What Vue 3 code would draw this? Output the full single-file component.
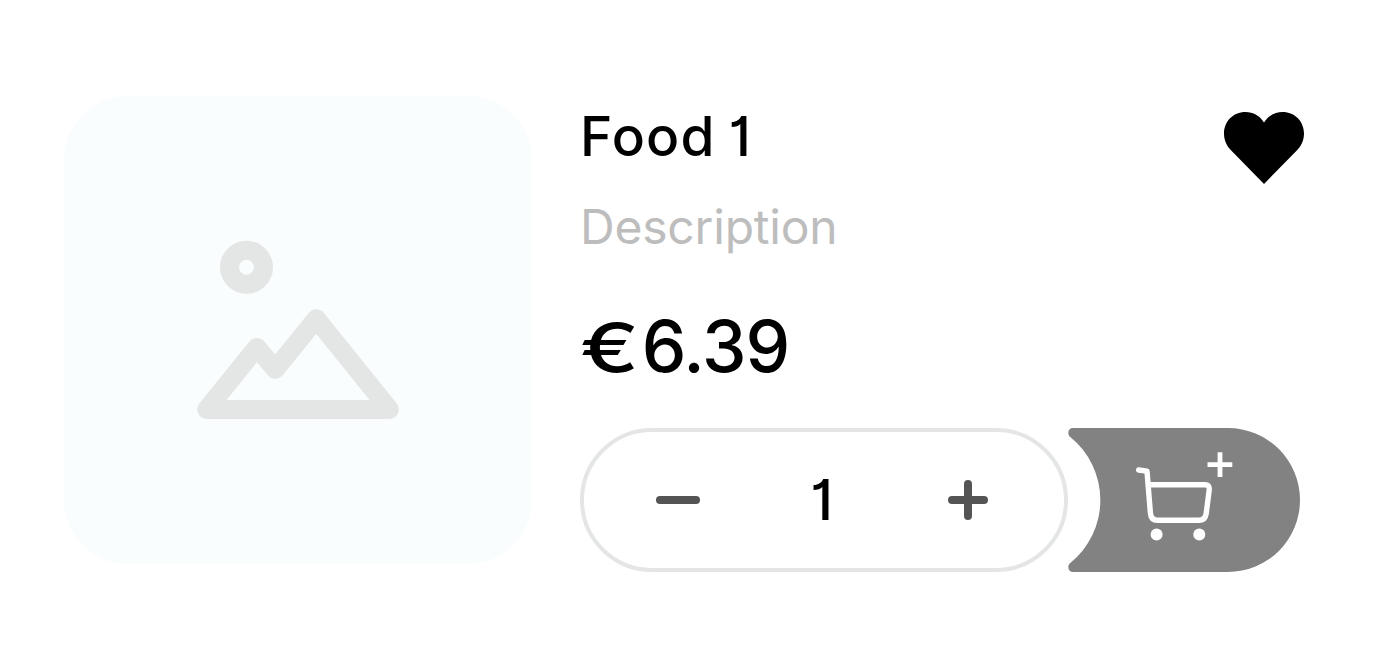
<template>
  <div class="food-card">
    <!-- image placeholder -->
    <div class="thumb">
      <svg class="thumb-icon" viewBox="0 0 202 180">
        <circle cx="49.5" cy="27.3" r="17" />
        <path d="M9.7 169.5 L59.8 107.4 L78.3 129.3 L119.3 78.7 L192.4 169.5 Z" />
      </svg>
    </div>

    <div class="info">
      <div class="head">
        <div class="names">
          <h2 class="title">{{ food.name }}</h2>
          <p class="description">{{ food.description }}</p>
        </div>
        <button class="like" @click="liked = !liked">
          <svg viewBox="0 0 80 72" :class="{ off: !liked }">
            <path d="M40 10.5 C36 4 29 0 21.5 0 C9 0 0 9.7 0 21.5 C0 28 2.3 33 6.5 37.8 L40 72 L73.5 37.8 C77.7 33 80 28 80 21.5 C80 9.7 71 0 58.5 0 C51 0 44 4 40 10.5 Z" />
          </svg>
        </button>
      </div>

      <p class="price"><span class="currency">€</span>{{ food.price }}</p>

      <div class="actions">
        <div class="stepper">
          <button class="step" @click="decrease">
            <svg viewBox="0 0 44 44"><path d="M4 22 H40" /></svg>
          </button>
          <span class="count">{{ count }}</span>
          <button class="step" @click="count++">
            <svg viewBox="0 0 44 44"><path d="M6 22 H38 M22 6 V38" /></svg>
          </button>
        </div>

        <!-- add to cart -->
        <button class="add">
          <svg viewBox="0 0 232 144">
            <path class="add-bg" d="M4.5 0 H160 A72 72 0 0 1 160 144 H4.5 C0.5 144 -1.2 138 2 135.2 A81 81 0 0 0 2 8.8 C-1.2 6 0.5 0 4.5 0 Z" />
            <path class="cart" d="M70.7 42 L79 43.2 L82.4 85 Q83 92.3 89.5 92.3 H131 Q137.2 92.3 138.2 85.5 L141.2 62 Q141.8 56.7 137 56.7 H80.5" />
            <circle class="wheel" cx="88.6" cy="106.4" r="6" />
            <circle class="wheel" cx="131.3" cy="106.4" r="6" />
            <path class="cart-plus" d="M139.5 36.7 H164.3 M152 24.2 V49" />
          </svg>
        </button>
      </div>
    </div>
  </div>
</template>

<script setup>
import { ref } from 'vue';

const food = {
  name: 'Food 1',
  description: 'Description',
  price: '6.39',
};

const liked = ref(true);
const count = ref(1);

const decrease = () => {
  if (count.value > 1) {
    count.value--;
  }
};
</script>

<style>
body {
  margin: 0;
  background: #fff;
}
</style>

<style scoped>
.food-card {
  display: flex;
  align-items: flex-start;
  gap: 48px;
  box-sizing: border-box;
  width: 1376px;
  height: 660px;
  padding: 96px 72px 88px 64px;
  font-family: Inter, "Liberation Sans", sans-serif;
  color: #000;
}

button {
  display: block;
  padding: 0;
  border: none;
  background: none;
  cursor: pointer;
}

svg {
  display: block;
}

.thumb {
  display: flex;
  flex: none;
  box-sizing: border-box;
  width: 468px;
  height: 468px;
  padding: 144px 0 0 133px;
  border-radius: 64px;
  background: #f9fdfe;
}

.thumb-icon {
  width: 202px;
  height: 180px;
  fill: none;
  stroke: #e4e6e5;
  stroke-width: 19;
  stroke-linejoin: round;
}

.info {
  flex: 1;
}

.head {
  display: flex;
  justify-content: space-between;
  height: 212px;
}

.title {
  margin: 0;
  padding-top: 4px;
  font-size: 55px;
  font-weight: 500;
  line-height: 72px;
  letter-spacing: 1.2px;
  word-spacing: -3px;
  font-feature-settings: "cv01";
}

.description {
  margin: 26px 0 0;
  font-size: 48px;
  line-height: 58px;
  letter-spacing: -0.2px;
  color: #bdbdbd;
}

.like {
  width: 80px;
  height: 72px;
  margin-top: 16px;
}

.like .off {
  opacity: 0.3;
}

.price {
  margin: 0;
  height: 120px;
  font-size: 71px;
  font-weight: 500;
  line-height: 76px;
  letter-spacing: -1px;
}

/* wide euro sign */
.currency {
  display: inline-block;
  margin-right: 15px;
  transform: scale(1.24, 0.95);
  transform-origin: 0 80%;
}

.actions {
  display: flex;
}

.stepper {
  display: flex;
  align-items: center;
  justify-content: space-between;
  box-sizing: border-box;
  width: 488px;
  height: 144px;
  padding: 0 74px 0 72px;
  border: 4px solid #e4e6e5;
  border-radius: 72px;
}

.step svg {
  width: 44px;
  height: 44px;
  fill: none;
  stroke: #545454;
  stroke-width: 8;
  stroke-linecap: round;
}

.count {
  padding-right: 3px;
  font-size: 56px;
  font-weight: 500;
  line-height: 72px;
  font-feature-settings: "cv01";
}

.add svg {
  width: 232px;
  height: 144px;
}

.add-bg {
  fill: #828282;
}

.cart,
.cart-plus {
  fill: none;
  stroke: #fff;
  stroke-width: 5.4;
  stroke-linecap: round;
  stroke-linejoin: round;
}

.cart-plus {
  stroke-width: 4.8;
  stroke-linecap: butt;
}

.wheel {
  fill: #fff;
}
</style>
